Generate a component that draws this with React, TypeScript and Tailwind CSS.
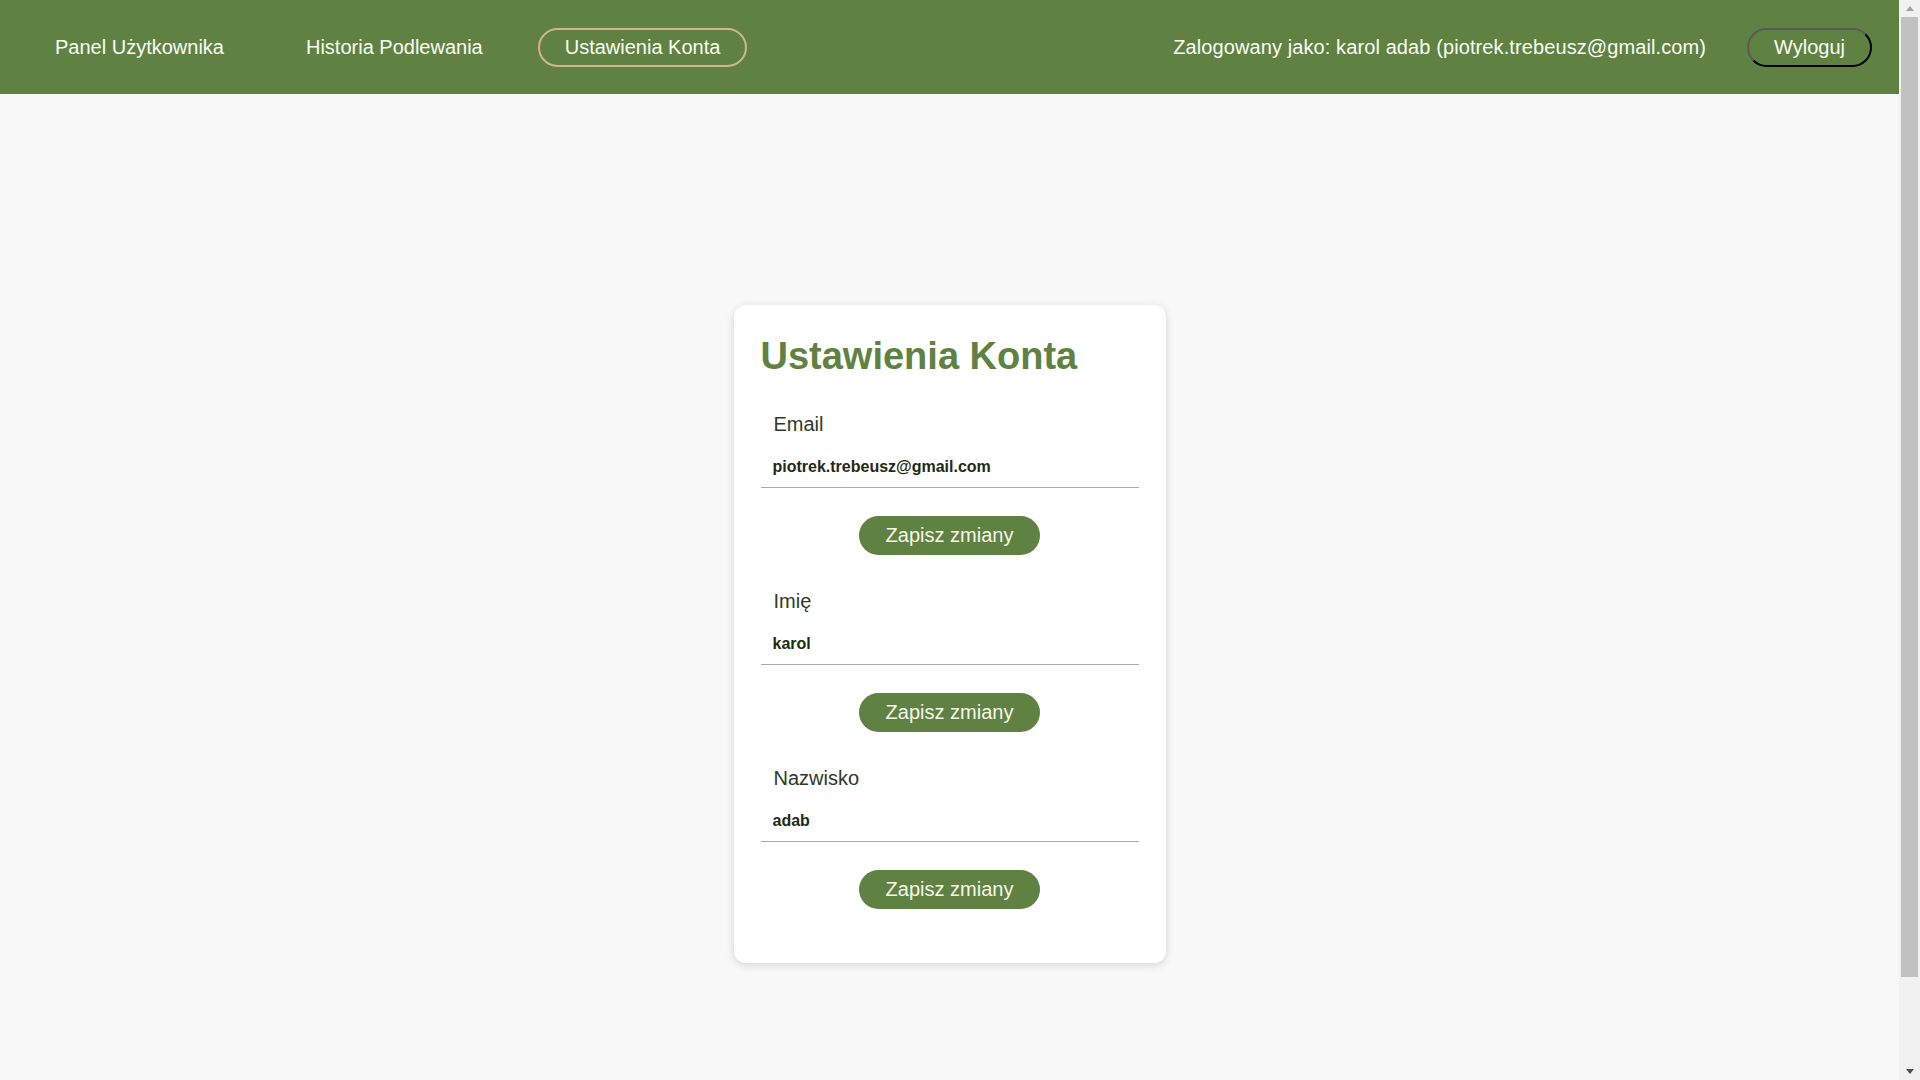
import React from "react";

const fields = [
  { label: "Email", value: "piotrek.trebeusz@gmail.com" },
  { label: "Imię", value: "karol" },
  { label: "Nazwisko", value: "adab" },
];

function FakeScrollbar() {
  return (
    <div className="fixed top-0 right-0 h-screen w-[21px] bg-[#f1f1f1] flex flex-col items-center">
      <div className="h-[17px] w-full flex items-center justify-center">
        <svg width="8" height="5" viewBox="0 0 8 5">
          <polygon points="4,0 8,5 0,5" fill="#a3a3a3" />
        </svg>
      </div>
      <div className="flex-1 w-full px-[2px]">
        <div className="h-[960px] w-full bg-[#c1c1c1]" />
      </div>
      <div className="h-[17px] w-full flex items-center justify-center">
        <svg width="8" height="5" viewBox="0 0 8 5">
          <polygon points="0,0 8,0 4,5" fill="#505050" />
        </svg>
      </div>
    </div>
  );
}

export default function App() {
  return (
    <div className="bg-[#f8f8f8] font-['Liberation_Sans',Arial,sans-serif]">
      <div className="mr-[21px]">
        <nav className="h-[94px] bg-[#5f8243] flex items-center justify-between pl-[28px] pr-[27px] text-[20px] leading-[23px] text-[#fbfbf3]">
          <div className="flex items-center gap-[28px]">
            <a className="border-2 border-transparent rounded-full px-[25px] py-[6px] cursor-pointer">Panel Użytkownika</a>
            <a className="border-2 border-transparent rounded-full px-[25px] py-[6px] cursor-pointer">Historia Podlewania</a>
            <a className="border-2 border-[#d2b48c] rounded-full px-[25px] py-[6px] cursor-pointer">Ustawienia Konta</a>
          </div>
          <div className="flex items-center gap-[41px]">
            <span className="tracking-[0.1px]">Zalogowany jako: karol adab (piotrek.trebeusz@gmail.com)</span>
            <button className="border-2 border-t-[#5a5a5a] border-l-[#5a5a5a] border-b-black border-r-black rounded-full px-[25px] py-[6px] text-[20px] leading-[23px] text-[#fbfbf3]">
              Wyloguj
            </button>
          </div>
        </nav>
        <main className="min-h-screen flex items-center justify-center">
          <div className="w-[432px] bg-white rounded-xl shadow-[0_2px_8px_rgba(0,0,0,0.15)] px-[27px] pt-[23px] pb-[54px] flex flex-col">
            <h1 className="text-[38px] leading-normal font-bold text-[#5f8243] m-0 mb-[24px]">Ustawienia Konta</h1>
            {fields.map((f, i) => (
              <div key={f.label} className={i < fields.length - 1 ? "flex flex-col mb-[31px]" : "flex flex-col"}>
                <label className="block text-[20px] leading-normal text-[#2c3a28] pl-[13px] mb-[6px]">{f.label}</label>
                <input
                  readOnly
                  value={f.value}
                  className="w-full pt-[10px] pb-[8px] px-[12px] text-[16px] leading-normal font-bold text-[#1d2b12] bg-transparent border-b border-[#aaaaaa] outline-none font-['Liberation_Sans',Arial,sans-serif]"
                />
                <div className="flex justify-center mt-[28px]">
                  <button className="bg-[#5f8243] rounded-full px-[27px] py-2 text-[20px] leading-[23px] text-[#f7f6ea] font-['Liberation_Sans',Arial,sans-serif]">
                    Zapisz zmiany
                  </button>
                </div>
              </div>
            ))}
          </div>
        </main>
      </div>
      <FakeScrollbar />
    </div>
  );
}
